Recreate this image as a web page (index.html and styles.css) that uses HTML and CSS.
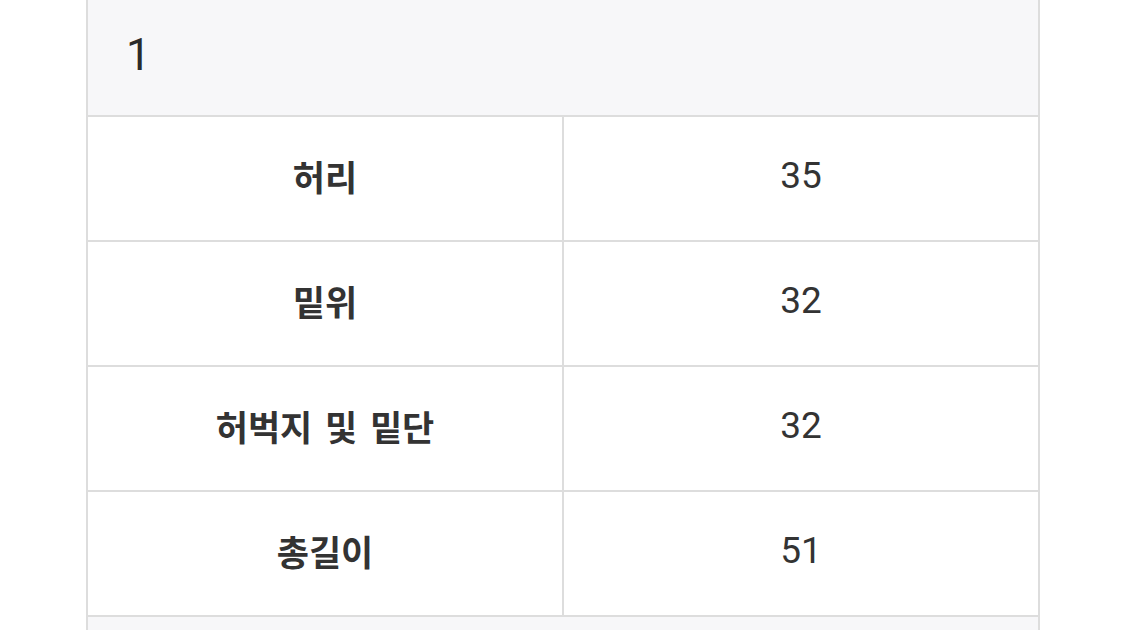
FILE: index.html
```html
<!DOCTYPE html>
<html lang="ko">
<head>
<meta charset="utf-8">
<link rel="stylesheet" href="styles.css">
</head>
<body>
<div class="wrap">
  <table class="size-table">
    <thead>
      <tr><th colspan="2" class="head">1</th></tr>
    </thead>
    <tbody>
      <tr><th class="label">허리</th><td class="val">35</td></tr>
      <tr><th class="label">밑위</th><td class="val">32</td></tr>
      <tr><th class="label">허벅지 및 밑단</th><td class="val">32</td></tr>
      <tr><th class="label">총길이</th><td class="val">51</td></tr>
      <tr><th colspan="2" class="head next"></th></tr>
    </tbody>
  </table>
</div>
</body>
</html>
```

FILE: styles.css
```css
html, body {
  margin: 0;
  padding: 0;
  background: #ffffff;
}
body {
  font-family: Roboto, "Noto Sans CJK KR", sans-serif;
  color: #333333;
  overflow: hidden;
}
.wrap {
  padding-left: 86px;
  margin-top: -2px;
}
.size-table {
  width: 954px;
  border-collapse: collapse;
  table-layout: fixed;
}
.size-table th, .size-table td {
  border: 2px solid #dddddd;
  padding: 0;
}
.head {
  background: #f7f7f9;
  height: 109px;
  text-align: left;
  padding-left: 38px !important;
  padding-bottom: 6px !important;
  font-weight: 400;
  font-size: 44px;
  color: #2a2a2a;
}
.label, .val {
  height: 117px;
  padding-bottom: 6px !important;
  text-align: center;
}
.label {
  font-weight: 700;
  font-size: 35px;
  word-spacing: 4px;
}
.val {
  font-weight: 400;
  font-size: 37px;
}
.next {
  height: 60px;
}
```
